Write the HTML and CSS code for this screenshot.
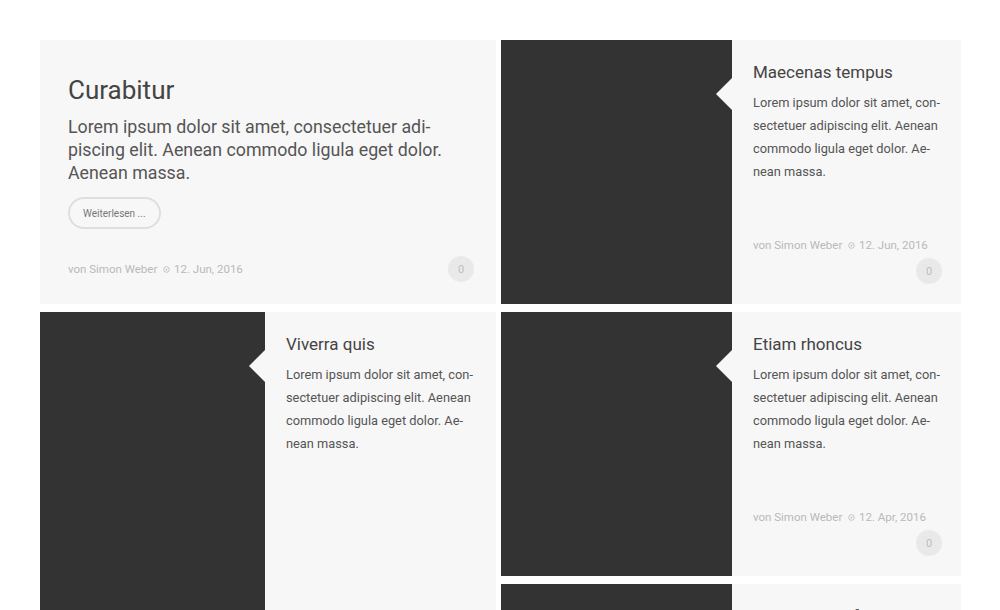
FILE: index.html
```html
<!DOCTYPE html>
<html lang="de">
<head>
<meta charset="utf-8">
<title>Blog</title>
<link rel="stylesheet" href="styles.css">
</head>
<body>
<main class="grid">
  <div class="col col-left">
    <article class="card card-text">
      <h2 class="feature-title">Curabitur</h2>
      <p class="feature-excerpt">Lorem ipsum dolor sit amet, consectetuer adi&shy;piscing elit. Aenean commodo ligula eget dolor. Aenean massa.</p>
      <a class="more" href="#">Weiterlesen ...</a>
      <div class="meta meta-wide">
        <span class="byline">von Simon Weber <svg class="clock" viewBox="0 0 8 8" width="7" height="7"><circle cx="4" cy="4" r="3.2" fill="none" stroke="#bbb" stroke-width="1"/><circle cx="4" cy="4" r="1" fill="#bbb"/></svg> 12. Jun, 2016</span>
        <span class="bubble">0</span>
      </div>
    </article>

    <article class="card card-media card-tall">
      <div class="media media-left"></div>
      <div class="body">
        <h3 class="title">Viverra quis</h3>
        <p class="excerpt">Lorem ipsum dolor sit amet, con&shy;sectetuer adipiscing elit. Aenean commodo ligula eget dolor. Ae&shy;nean massa.</p>
      </div>
    </article>
  </div>

  <div class="col col-right">
    <article class="card card-media">
      <div class="media"></div>
      <div class="body">
        <h3 class="title">Maecenas tempus</h3>
        <p class="excerpt">Lorem ipsum dolor sit amet, con&shy;sectetuer adipiscing elit. Aenean commodo ligula eget dolor. Ae&shy;nean massa.</p>
        <div class="meta">
          <span class="byline">von Simon Weber <svg class="clock" viewBox="0 0 8 8" width="7" height="7"><circle cx="4" cy="4" r="3.2" fill="none" stroke="#bbb" stroke-width="1"/><circle cx="4" cy="4" r="1" fill="#bbb"/></svg> 12. Jun, 2016</span>
          <span class="bubble">0</span>
        </div>
      </div>
    </article>

    <article class="card card-media">
      <div class="media"></div>
      <div class="body">
        <h3 class="title">Etiam rhoncus</h3>
        <p class="excerpt">Lorem ipsum dolor sit amet, con&shy;sectetuer adipiscing elit. Aenean commodo ligula eget dolor. Ae&shy;nean massa.</p>
        <div class="meta">
          <span class="byline">von Simon Weber <svg class="clock" viewBox="0 0 8 8" width="7" height="7"><circle cx="4" cy="4" r="3.2" fill="none" stroke="#bbb" stroke-width="1"/><circle cx="4" cy="4" r="1" fill="#bbb"/></svg> 12. Apr, 2016</span>
          <span class="bubble">0</span>
        </div>
      </div>
    </article>

    <article class="card card-media">
      <div class="media"></div>
      <div class="body">
        <h3 class="title">Donec quam felis</h3>
        <p class="excerpt">Lorem ipsum dolor sit amet, con&shy;sectetuer adipiscing elit. Aenean commodo ligula eget dolor.</p>
      </div>
    </article>
  </div>
</main>
</body>
</html>
```

FILE: styles.css
```css
* { box-sizing: border-box; }

html, body {
  margin: 0;
  padding: 0;
  background: #ffffff;
}

body {
  font-family: Roboto, "Liberation Sans", Arial, sans-serif;
  color: #555;
  overflow: hidden;
}

.grid {
  display: grid;
  grid-template-columns: 456px 460px;
  column-gap: 5px;
  padding: 40px 0 0 40px;
  align-items: start;
}

.col {
  display: flex;
  flex-direction: column;
  gap: 8px;
}

.card {
  background: #f7f7f7;
}

/* Feature text card */
.card-text {
  height: 264px;
  padding: 36px 22px 22px 28px;
  display: flex;
  flex-direction: column;
  align-items: flex-start;
}

.feature-title {
  margin: 0;
  font-size: 26px;
  line-height: 28px;
  font-weight: 400;
  color: #444;
}

.feature-excerpt {
  margin: 11px 6px 0 0;
  font-size: 17.8px;
  line-height: 23px;
  color: #555;
  hyphens: manual;
}

.more {
  margin-top: 13px;
  display: inline-flex;
  align-items: center;
  height: 32px;
  padding: 0 13px;
  border: 2px solid #dedede;
  border-radius: 16px;
  font-size: 10px;
  color: #777;
  text-decoration: none;
}

.meta {
  display: flex;
  flex-wrap: wrap;
  align-items: center;
  width: 100%;
  margin-top: auto;
  row-gap: 3.5px;
}

.byline {
  font-size: 11.5px;
  line-height: 20px;
  color: #b9b9b9;
  white-space: nowrap;
}

.clock {
  display: inline-block;
  vertical-align: 0;
  margin: 0 1px 0 3px;
}

.bubble {
  margin-left: auto;
  width: 26px;
  height: 26px;
  border-radius: 50%;
  background: #e9e9e9;
  color: #bdbdbd;
  font-size: 11px;
  display: flex;
  align-items: center;
  justify-content: center;
}

/* Media cards */
.card-media {
  display: flex;
  height: 264px;
}

.card-tall {
  height: 420px;
}

.media {
  flex: 0 0 231px;
  background: #333333;
}

.media-left {
  flex-basis: 225px;
}

.body {
  position: relative;
  flex: 1 1 auto;
  min-width: 0;
  display: flex;
  flex-direction: column;
  padding: 20px 19px 20px 21px;
}

.body::before {
  content: "";
  position: absolute;
  left: -16px;
  top: 38px;
  border-top: 16px solid transparent;
  border-bottom: 16px solid transparent;
  border-right: 16px solid #f7f7f7;
}

.title {
  margin: 0;
  font-size: 17px;
  line-height: 24px;
  font-weight: 400;
  color: #444;
}

.excerpt {
  margin: 7px 0 0 0;
  font-size: 12.8px;
  line-height: 23px;
  color: #555;
  hyphens: manual;
}
```
